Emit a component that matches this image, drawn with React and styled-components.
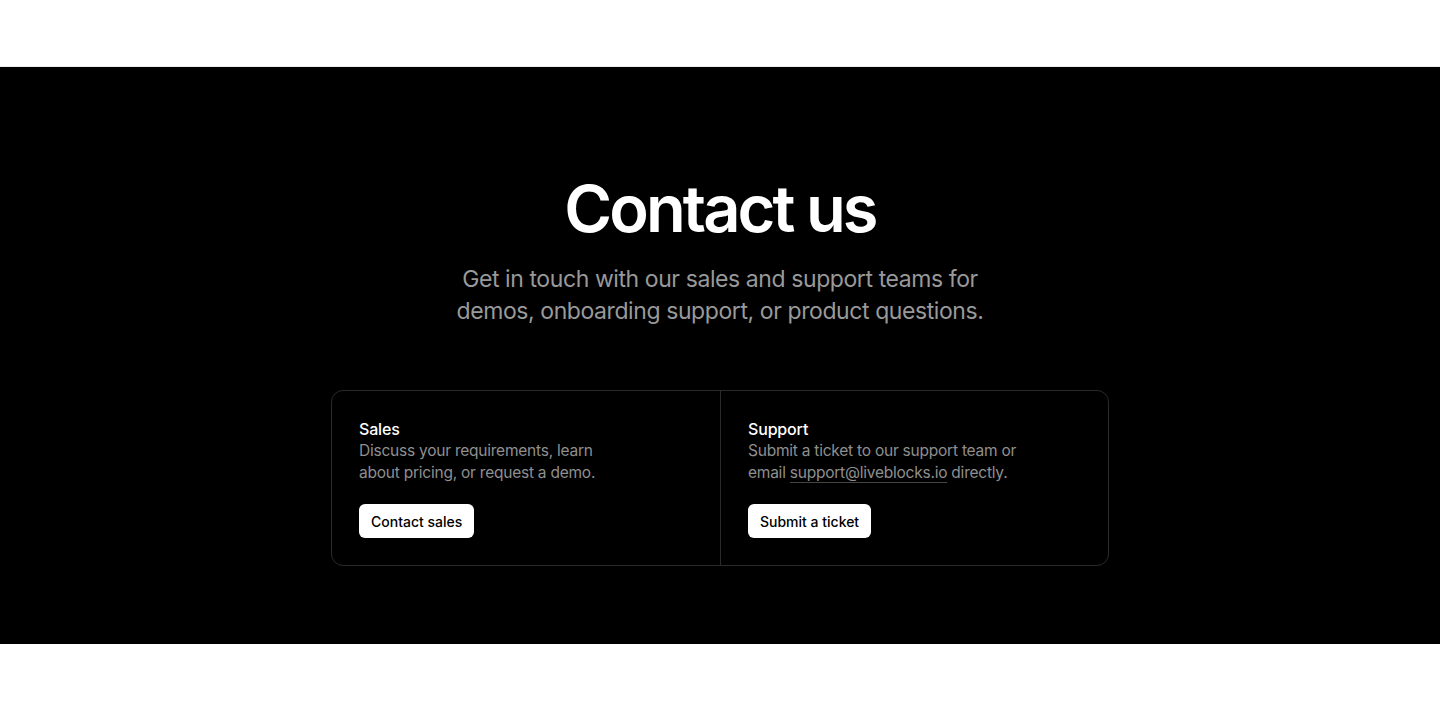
import styled, { createGlobalStyle } from 'styled-components';

const GlobalStyle = createGlobalStyle`
  body {
    margin: 0;
    background: #fff;
    font-family: 'Inter', 'Liberation Sans', sans-serif;
    -webkit-font-smoothing: antialiased;
  }
`;

const App = () => {
  return (
    <>
      <GlobalStyle />
      <TopBar />
      <Section>
        <Title>Contact us</Title>
        <Lead>
          Get in touch with our sales and support teams for demos, onboarding
          support, or product questions.
        </Lead>
        <Cards>
          {contacts.map((c) => (
            <Card key={c.title}>
              <CardTitle>{c.title}</CardTitle>
              <CardText>{c.body}</CardText>
              <Button>{c.action}</Button>
            </Card>
          ))}
        </Cards>
      </Section>
      <Footer />
    </>
  );
};

const TopBar = styled.header`
  height: 66px;
  border-bottom: 1px solid #ececec;
  background: #fff;
`;

const Section = styled.main`
  background: #000;
  color: #fff;
  display: flex;
  flex-direction: column;
  align-items: center;
  padding: 104px 24px 78px;
`;

const Title = styled.h1`
  margin: 0;
  font-size: 65px;
  line-height: 75px;
  font-weight: 600;
  letter-spacing: -0.045em;
`;

const Lead = styled.p`
  margin: 17px 0 0;
  max-width: 560px;
  text-align: center;
  font-size: 23px;
  line-height: 32px;
  color: #999;
  letter-spacing: -0.018em;
`;

const Cards = styled.div`
  box-sizing: border-box;
  margin-top: 63px;
  width: 778px;
  display: grid;
  grid-template-columns: 1fr 1fr;
  border: 1px solid #2a2a2a;
  border-radius: 12px;
`;

const Card = styled.div`
  padding: 27px;
  display: flex;
  flex-direction: column;
  align-items: flex-start;

  & + & {
    border-left: 1px solid #2a2a2a;
  }
`;

const CardTitle = styled.h3`
  margin: 0;
  font-size: 16px;
  line-height: 22px;
  font-weight: 500;
  color: #fff;
  letter-spacing: -0.01em;
`;

const CardText = styled.p`
  margin: 0;
  max-width: 272px;
  font-size: 15.5px;
  line-height: 22px;
  color: #8f8f8f;
  letter-spacing: -0.015em;
`;

const MailLink = styled.a`
  color: inherit;
  text-decoration: underline;
  text-decoration-color: #444;
  text-underline-offset: 4px;
`;

const Button = styled.button`
  margin-top: 20px;
  height: 34px;
  padding: 0 12px;
  border: none;
  border-radius: 6px;
  background: #fff;
  color: #000;
  font-family: inherit;
  font-size: 14px;
  font-weight: 500;
  cursor: pointer;
`;

const Footer = styled.footer`
  height: 67px;
  background: #fff;
`;

const contacts = [
  {
    title: 'Sales',
    body: <>Discuss your requirements, learn about pricing, or request a demo.</>,
    action: 'Contact sales',
  },
  {
    title: 'Support',
    body: (
      <>
        Submit a ticket to our support team or email{' '}
        <MailLink href='mailto:support@liveblocks.io'>support@liveblocks.io</MailLink>{' '}
        directly.
      </>
    ),
    action: 'Submit a ticket',
  },
];

export default App;
